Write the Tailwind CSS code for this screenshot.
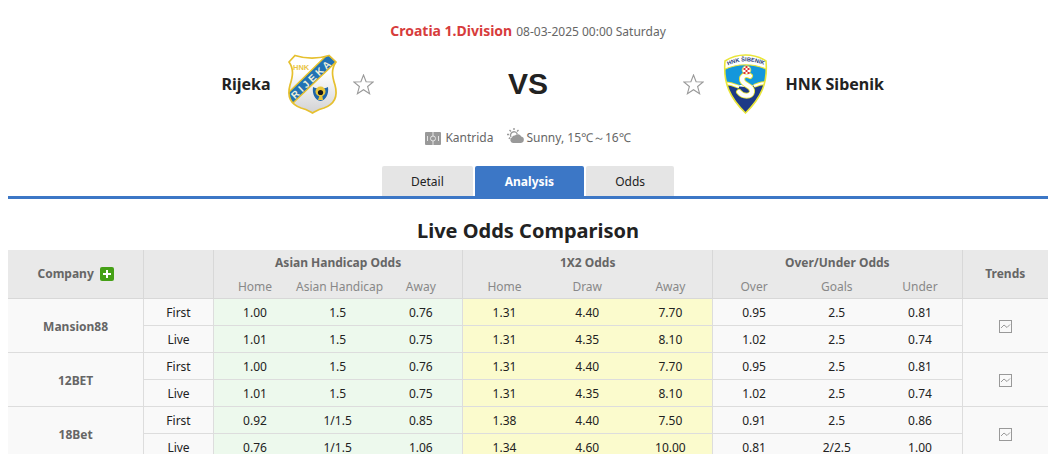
<!DOCTYPE html>
<html lang="en">
<head>
    <meta charset="UTF-8">
    <meta name="viewport" content="width=device-width, initial-scale=1.0">
    <title>Rijeka VS HNK Sibenik</title>
    <script src="https://cdn.jsdelivr.net/npm/@tailwindcss/browser@4"></script>
</head>
<body class="bg-white font-['Noto_Sans',sans-serif] text-xs text-[#222] overflow-x-hidden">
    <div class="pl-2 pr-[2px]">

        <!-- Match header -->
        <header class="pt-5">
            <div class="flex justify-center items-baseline gap-1 leading-[22px]">
                <a href="#" class="text-sm leading-[22px] font-bold text-[#d73c3c]">Croatia 1.Division</a>
                <span class="text-[#666]">08-03-2025 00:00 Saturday</span>
            </div>

            <div class="mt-[11px] grid grid-cols-[1fr_309px_1fr] items-center">
                <div class="flex items-center justify-end gap-[11px]">
                    <a href="#" class="text-base font-bold">Rijeka</a>
                    <svg class="size-[60px]" viewBox="0 0 60 60" role="img" aria-label="Rijeka">
                        <defs>
                            <linearGradient id="silver" x1="0" y1="0" x2="0" y2="1">
                                <stop offset="0.3" stop-color="#fff"/>
                                <stop offset="1" stop-color="#d2d2d4"/>
                            </linearGradient>
                            <clipPath id="rijekaShield">
                                <path d="M7 8 13 1.5C24 5 36 5 47 1.5L54 8C49 15 50 22 53 31C56 42 53 50 42 54C37 55 34 57 30.5 59C27 57 24 55 19 54C8 50 5 42 8 31C11 22 12 15 7 8Z"/>
                            </clipPath>
                        </defs>
                        <path d="M7 8 13 1.5C24 5 36 5 47 1.5L54 8C49 15 50 22 53 31C56 42 53 50 42 54C37 55 34 57 30.5 59C27 57 24 55 19 54C8 50 5 42 8 31C11 22 12 15 7 8Z" fill="url(#silver)"/>
                        <g clip-path="url(#rijekaShield)">
                            <path d="M3 42 46 0 55 7 10 50Z" fill="#2272b4" stroke="#e8c32c" stroke-width="1.5"/>
                        </g>
                        <path d="M7 8 13 1.5C24 5 36 5 47 1.5L54 8C49 15 50 22 53 31C56 42 53 50 42 54C37 55 34 57 30.5 59C27 57 24 55 19 54C8 50 5 42 8 31C11 22 12 15 7 8Z" fill="none" stroke="#e6c02f" stroke-width="1.7"/>
                        <text x="11" y="15.5" font-family="Liberation Sans" font-size="7.5" font-weight="bold" fill="#e9c544">HNK</text>
                        <text transform="translate(13 45.5) rotate(-43.5)" font-family="Liberation Sans" font-size="10" font-weight="bold" fill="#eef0dc">R I J E K A</text>
                        <path d="M31 33C35 35 42 35 46 33C47 40 44 46 38.5 47C33 46 30 40 31 33Z" fill="#1f65a8"/>
                        <circle cx="38.5" cy="37.5" r="5" fill="#e8c63b"/>
                        <path d="M38 40 36 46H41L40 40Z" fill="#e8c63b"/>
                        <circle cx="38.5" cy="38.5" r="2.6" fill="#15181c"/>
                    </svg>
                    <button type="button" aria-label="Follow Rijeka">
                        <svg class="size-[21px]" viewBox="0 0 21 21" fill="none" stroke="#999" stroke-width="1.1"><path d="M10.5 1 13.1 7.7 20.2 8 14.6 12.5 16.6 19.7 10.5 15.7 4.4 19.7 6.4 12.5 0.8 8 7.9 7.7Z"/></svg>
                    </button>
                </div>
                <div class="text-center font-['Liberation_Sans',sans-serif] text-3xl font-bold">VS</div>
                <div class="flex items-center gap-[11px]">
                    <button type="button" aria-label="Follow HNK Sibenik">
                        <svg class="size-[21px]" viewBox="0 0 21 21" fill="none" stroke="#999" stroke-width="1.1"><path d="M10.5 1 13.1 7.7 20.2 8 14.6 12.5 16.6 19.7 10.5 15.7 4.4 19.7 6.4 12.5 0.8 8 7.9 7.7Z"/></svg>
                    </button>
                    <svg class="size-[60px]" viewBox="0 0 60 60" role="img" aria-label="HNK Sibenik">
                        <defs>
                            <clipPath id="sibenikShield">
                                <path d="M10 7C22 -1 39 -1 51 7C53 29 46 44 30.5 59C15 44 8 29 10 7Z"/>
                            </clipPath>
                            <path id="sibenikArc" d="M13 11.5C24 6 37 6 50 11.5"/>
                        </defs>
                        <g clip-path="url(#sibenikShield)">
                            <path d="M0 0H60V60H0Z" fill="#fff"/>
                            <path d="M8 16C22 9 39 9 53 16V31H8Z" fill="#1497dc"/>
                            <path d="M8 30C16 28 21 33 30 33C39 33 44 28 53 30V60H8Z" fill="#1d3a86"/>
                            <path d="M8 16C22 9 39 9 53 16" fill="none" stroke="#e9e53a" stroke-width="1.2"/>
                            <path d="M8 30C14 28 19 31 24 33M39 32C44 30 48 28 53 30" fill="none" stroke="#e9e53a" stroke-width="4"/>
                            <path d="M8 30C14 28 19 31 24 33M39 32C44 30 48 28 53 30" fill="none" stroke="#fff" stroke-width="2"/>
                        </g>
                        <path d="M35 22C30 19 25 23 28 28C31 32 38 32 37 38C36 43 28 43 24 38" fill="none" stroke="#e9e53a" stroke-width="6" stroke-linecap="round"/>
                        <path d="M35 22C30 19 25 23 28 28C31 32 38 32 37 38C36 43 28 43 24 38" fill="none" stroke="#fff" stroke-width="4.2" stroke-linecap="round"/>
                        <circle cx="31.5" cy="16" r="4.3" fill="#fff" stroke="#e9e53a" stroke-width="0.8"/>
                        <path d="M30.5 12H32.5V14H30.5ZM28.5 14H30.5V16H28.5ZM32.5 14H34.5V16H32.5ZM30.5 16H32.5V18H30.5ZM28.5 18H30.5V20H28.5ZM32.5 18H34.5V20H32.5Z" fill="#dc3434"/>
                        <path d="M10 7C22 -1 39 -1 51 7C53 29 46 44 30.5 59C15 44 8 29 10 7Z" fill="none" stroke="#e9e53a" stroke-width="1.6"/>
                        <text font-family="Liberation Sans" font-size="5.7" font-weight="bold" fill="#273b78"><textPath href="#sibenikArc">HNK ŠIBENIK</textPath></text>
                    </svg>
                    <a href="#" class="text-base font-bold">HNK Sibenik</a>
                </div>
            </div>

            <div class="mt-[13px] flex justify-center gap-[14px] leading-[22px] text-[#666]">
                <span class="flex items-center gap-1">
                    <svg class="w-4 h-[13px]" viewBox="0 0 16 13">
                        <rect width="16" height="13" rx="1" fill="#999"/>
                        <g fill="none" stroke="#e4e4e4">
                            <circle cx="8" cy="6.5" r="2.5"/>
                            <path d="M8 0V4M8 9V13M2.5 4V9M13.5 4V9"/>
                        </g>
                    </svg>
                    Kantrida
                </span>
                <span class="flex items-center gap-[2px]">
                    <svg class="w-[17px] h-4 -mt-1" viewBox="0 0 17 16">
                        <path d="M7 0V2M2.5 2 4 3.5M11.5 2 10 3.5M0 6.5H2.2M1.8 10.7 3.2 9.6" stroke="#999" stroke-width="1.4"/>
                        <path d="M4 9A3.5 3.5 0 1 1 10.3 6" fill="none" stroke="#999" stroke-width="1.3"/>
                        <path d="M6 15A3 3 0 0 1 5 9.3A2.6 2.6 0 0 1 8 7.6A3.7 3.7 0 0 1 14.2 8.5A3.3 3.3 0 0 1 14 15Z" fill="#999"/>
                    </svg>
                    Sunny, 15℃～16℃
                </span>
            </div>
        </header>

        <!-- Tabs -->
        <nav class="mt-[17px] flex justify-center gap-[2px] border-b-[3px] border-[#3c77c6] leading-7">
            <a href="#" class="rounded-t-xs bg-[#e5e5e5] px-[29px] pt-[2px]">Detail</a>
            <a href="#" class="rounded-t-xs bg-[#3c77c6] px-[30px] pt-[2px] font-bold text-white">Analysis</a>
            <a href="#" class="rounded-t-xs bg-[#e5e5e5] px-[29px] pt-[2px]">Odds</a>
        </nav>

        <h2 class="pt-[17px] pb-1 text-center text-xl leading-[30px] font-bold">Live Odds Comparison</h2>

        <!-- Odds table -->
        <table class="w-full table-fixed border-separate border-spacing-0 text-center">
            <colgroup>
                <col class="w-[13%]">
                <col class="w-[6.7%]">
                <col span="9" class="w-[8%]">
                <col>
            </colgroup>
            <thead class="bg-[#e9e9e9] text-[#666]">
                <tr class="h-[25px]">
                    <th rowspan="2" class="border-b border-[#d8d8d8]">
                        <span class="flex items-center justify-center gap-[6px]">
                            Company
                            <button type="button" aria-label="Add company" class="size-[14px] rounded-xs bg-[#45a016]">
                                <svg viewBox="0 0 14 14" stroke="#fff" stroke-width="2"><path d="M7 3V11M3 7H11"/></svg>
                            </button>
                        </span>
                    </th>
                    <th rowspan="2" class="border-l border-b border-[#d8d8d8]"></th>
                    <th colspan="3" class="border-l border-[#d8d8d8]">Asian Handicap Odds</th>
                    <th colspan="3" class="border-l border-[#d8d8d8]">1X2 Odds</th>
                    <th colspan="3" class="border-l border-[#d8d8d8]">Over/Under Odds</th>
                    <th rowspan="2" class="border-l border-b border-[#d8d8d8]">Trends</th>
                </tr>
                <tr class="h-6 text-[#888] whitespace-nowrap">
                    <th class="border-l border-b border-[#d8d8d8] font-normal">Home</th>
                    <th class="border-b border-[#d8d8d8] font-normal">Asian Handicap</th>
                    <th class="border-b border-[#d8d8d8] font-normal">Away</th>
                    <th class="border-l border-b border-[#d8d8d8] font-normal">Home</th>
                    <th class="border-b border-[#d8d8d8] font-normal">Draw</th>
                    <th class="border-b border-[#d8d8d8] font-normal">Away</th>
                    <th class="border-l border-b border-[#d8d8d8] font-normal">Over</th>
                    <th class="border-b border-[#d8d8d8] font-normal">Goals</th>
                    <th class="border-b border-[#d8d8d8] font-normal">Under</th>
                </tr>
            </thead>
            <tbody id="oddsBody" class="bg-[#f9f9f9]"></tbody>
        </table>
    </div>

<script>
const companies = [
    {
        name: 'Mansion88',
        first: ['1.00', '1.5', '0.76', '1.31', '4.40', '7.70', '0.95', '2.5', '0.81'],
        live: ['1.01', '1.5', '0.75', '1.31', '4.35', '8.10', '1.02', '2.5', '0.74']
    },
    {
        name: '12BET',
        first: ['1.00', '1.5', '0.76', '1.31', '4.40', '7.70', '0.95', '2.5', '0.81'],
        live: ['1.01', '1.5', '0.75', '1.31', '4.35', '8.10', '1.02', '2.5', '0.74']
    },
    {
        name: '18Bet',
        first: ['0.92', '1/1.5', '0.85', '1.38', '4.40', '7.50', '0.91', '2.5', '0.86'],
        live: ['0.76', '1/1.5', '1.06', '1.34', '4.60', '10.00', '0.81', '2/2.5', '1.00']
    }
];

// one colour per group of three columns
const groupColors = ['bg-[#edf9ed]', 'bg-[#fbfbcd]', 'bg-[#f9f9f9]'];

function renderOdds(odds) {
    return odds.map((value, i) => `
        <td class="border-b border-[#ddd] pt-[2px] ${i % 3 === 0 ? 'border-l' : ''} ${groupColors[Math.floor(i / 3)]}">${value}</td>
    `).join('');
}

document.getElementById('oddsBody').innerHTML = companies.map(company => `
    <tr class="h-[27px]">
        <th rowspan="2" class="border-b border-[#ddd] pt-[2px] text-[#666]">${company.name}</th>
        <td class="border-l border-b border-[#ddd] pt-[2px]">First</td>
        ${renderOdds(company.first)}
        <td rowspan="2" class="border-l border-b border-[#ddd]">
            <a href="#" aria-label="${company.name} trends" class="inline-block align-middle">
                <svg class="size-[13px]" viewBox="0 0 13 13" fill="none" stroke="#999"><rect x="0.5" y="0.5" width="12" height="12"/><path d="M2 8 5 5 8 7.5 11 4.5"/></svg>
            </a>
        </td>
    </tr>
    <tr class="h-[27px]">
        <td class="border-l border-b border-[#ddd] pt-[2px]">Live</td>
        ${renderOdds(company.live)}
    </tr>
`).join('');
</script>
</body>
</html>
